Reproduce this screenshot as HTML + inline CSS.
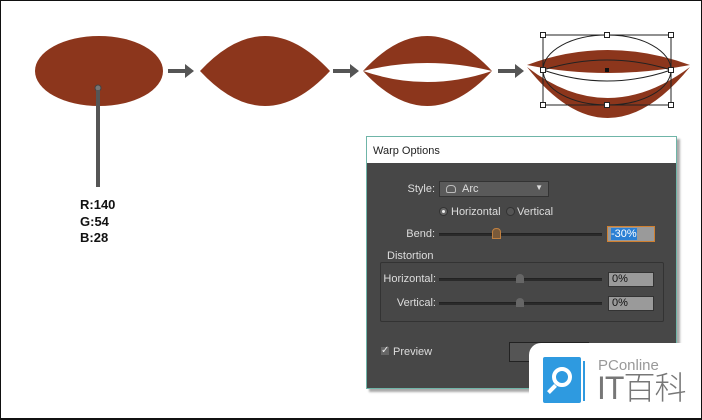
<!DOCTYPE html>
<html><head><meta charset="utf-8"><style>
*{margin:0;padding:0;box-sizing:border-box}
body{width:702px;height:420px;overflow:hidden;background:#fff;position:relative;font-family:"Liberation Sans",sans-serif}
.frame{position:absolute;left:0;top:0;width:702px;height:420px;border:1px solid #111;border-bottom-width:2px}
.abs{position:absolute}
.lbl{position:absolute;color:#ddd;font-size:11px;text-align:right}
.track{position:absolute;height:3px;background:#2a2a2a;border-top:1px solid #222}
.inp{position:absolute;background:#9a9a9a;border:1px solid #333;color:#111;font-size:11px;padding-left:3px;line-height:13px}
</style></head><body>
<svg class="abs" style="left:0;top:0" width="702" height="140">
<g fill="#8c361c">
<ellipse cx="99" cy="71" rx="64" ry="35"/>
<path d="M200,71 Q265,1 330,71 Q265,141 200,71Z"/>
<path d="M363,71 Q427,1 492,71 Q427,55 363,71Z"/>
<path d="M363,71 Q427,93 492,71 Q427,141 363,71Z"/>
<path d="M527,65 Q607,35 690,65 Q607,81 527,65Z"/>
<path d="M527,67 Q607,129 690,67 Q607,169 527,67Z"/>
</g>
<g fill="none" stroke="#222" stroke-width="1">
<rect x="543" y="35" width="128" height="70"/>
<ellipse cx="607" cy="70" rx="64" ry="35"/>
<path d="M543,70 Q607,50 671,70"/>
<path d="M543,70 Q607,92 671,70"/>
</g>
<g fill="#fff" stroke="#222">
<rect x="540.5" y="32.5" width="5" height="5"/><rect x="604.5" y="32.5" width="5" height="5"/><rect x="668.5" y="32.5" width="5" height="5"/>
<rect x="540.5" y="67.5" width="5" height="5"/><rect x="668.5" y="67.5" width="5" height="5"/>
<rect x="540.5" y="102.5" width="5" height="5"/><rect x="604.5" y="102.5" width="5" height="5"/><rect x="668.5" y="102.5" width="5" height="5"/>
</g>
<rect x="605" y="68" width="4" height="4" fill="#111"/>
<g fill="#555">
<path d="M168,69 h17 v-5 l9,7 -9,7 v-5 h-17z"/>
<path d="M333,69 h17 v-5 l9,7 -9,7 v-5 h-17z"/>
<path d="M498,69 h17 v-5 l9,7 -9,7 v-5 h-17z"/>
</g>
<circle cx="98" cy="88" r="3" fill="#777" stroke="#444"/>
</svg>
<div class="abs" style="left:96px;top:90px;width:4px;height:97px;background:#555"></div>
<div class="abs" style="left:80px;top:197px;font-size:13px;font-weight:bold;line-height:16.5px;color:#111">R:140<br>G:54<br>B:28</div>

<div class="abs" style="left:366px;top:136px;width:311px;height:253px;border:1px solid #6fb5a8;background:#474747;box-shadow:3px 3px 2px #aaa">
<div style="height:26px;background:#fff;color:#222;font-size:11px;padding:8px 0 0 6px">Warp Options</div>
</div>
<div class="lbl" style="left:395px;top:183px;width:40px">Style:</div>
<div class="abs" style="left:439px;top:181px;width:110px;height:16px;background:#5a5a5a;border:1px solid #333;color:#ddd;font-size:11px;padding:1px 0 0 22px">Arc<span style="position:absolute;right:5px;top:1px;font-size:8px">▼</span><span style="position:absolute;left:6px;top:3px;width:10px;height:8px;border:1px solid #bbb;border-radius:4px 4px 2px 2px"></span></div>
<div class="abs" style="left:439px;top:207px;width:9px;height:9px;border-radius:50%;background:#666;border:1px solid #333"><div style="width:3px;height:3px;background:#eee;border-radius:50%;margin:2px"></div></div>
<div class="lbl" style="left:451px;top:206px;text-align:left">Horizontal</div>
<div class="abs" style="left:506px;top:207px;width:9px;height:9px;border-radius:50%;background:#555;border:1px solid #333"></div>
<div class="lbl" style="left:517px;top:206px;text-align:left">Vertical</div>
<div class="lbl" style="left:395px;top:228px;width:40px">Bend:</div>
<div class="track" style="left:439px;top:233px;width:163px"></div>
<div class="abs" style="left:492px;top:228px;width:9px;height:11px;background:#7a5a3a;border:1px solid #c08040;border-radius:4px 4px 0 0"></div>
<div class="inp" style="left:607px;top:226px;width:48px;height:16px;border:1px solid #d08030;padding-top:1px"><span style="background:#2a7fd4;color:#fff">-30%</span></div>
<div class="abs" style="left:380px;top:262px;width:284px;height:60px;border:1px solid #333;border-radius:2px"></div>
<div class="lbl" style="left:385px;top:250px;text-align:left;background:#474747;padding:0 2px">Distortion</div>
<div class="lbl" style="left:380px;top:273px;width:56px">Horizontal:</div>
<div class="track" style="left:439px;top:278px;width:163px"></div>
<div class="abs" style="left:516px;top:274px;width:8px;height:9px;background:#666;border-radius:4px 4px 0 0"></div>
<div class="inp" style="left:608px;top:272px;width:46px;height:15px">0%</div>
<div class="lbl" style="left:380px;top:297px;width:56px">Vertical:</div>
<div class="track" style="left:439px;top:302px;width:163px"></div>
<div class="abs" style="left:516px;top:298px;width:8px;height:9px;background:#666;border-radius:4px 4px 0 0"></div>
<div class="inp" style="left:608px;top:296px;width:46px;height:15px">0%</div>
<div class="abs" style="left:381px;top:347px;width:8px;height:8px;background:#666;color:#eee;font-size:10px;line-height:8px">✓</div>
<div class="lbl" style="left:393px;top:346px;text-align:left">Preview</div>
<div class="abs" style="left:509px;top:342px;width:80px;height:20px;background:#555;border:1px solid #222"></div>

<div class="abs" style="left:529px;top:343px;width:173px;height:77px;background:#fff;border-top-left-radius:12px"></div>
<div class="abs" style="left:543px;top:357px;width:38px;height:46px;background:#2e9ae0;border-radius:2px"></div>
<div class="abs" style="left:552px;top:367px;width:20px;height:20px;border:4px solid #fff;border-radius:50%"></div>
<div class="abs" style="left:547px;top:387px;width:10px;height:4px;background:#fff;transform:rotate(-45deg)"></div>
<div class="abs" style="left:583px;top:361px;width:2px;height:40px;background:#2e9ae0"></div>
<div class="abs" style="left:598px;top:358px;font-size:15px;color:#999;line-height:16px">PConline</div>
<div class="abs" style="left:597px;top:371px;font-size:32px;color:#777;line-height:34px;font-weight:300;font-family:'Liberation Sans','Noto Sans CJK SC',sans-serif;letter-spacing:-1px">IT百科</div>
<div class="frame"></div>
</body></html>
